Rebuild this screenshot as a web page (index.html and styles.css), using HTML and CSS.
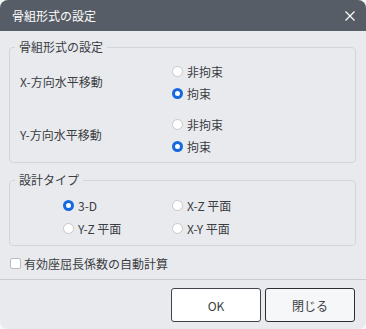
FILE: index.html
```html
<!DOCTYPE html>
<html>
<head>
    <title>骨組形式の設定</title>
    <link rel="stylesheet" href="styles.css">
</head>
<body>
    <div class="dialog">
        <div class="titlebar">
            <span class="title">骨組形式の設定</span>
            <button class="close-btn" aria-label="閉じる">
                <svg width="10" height="10" viewBox="0 0 10 10">
                    <path d="M0.5 0.5 L9.5 9.5 M9.5 0.5 L0.5 9.5" stroke="#ffffff" stroke-width="1.2" fill="none"/>
                </svg>
            </button>
        </div>

        <div class="dialog-body">
            <fieldset class="group">
                <legend>骨組形式の設定</legend>

                <div class="move-row">
                    <span class="row-label">X-方向水平移動</span>
                    <div class="radio-list">
                        <label class="radio"><input type="radio" name="xmove"><span>非拘束</span></label>
                        <label class="radio"><input type="radio" name="xmove" checked><span>拘束</span></label>
                    </div>
                </div>

                <div class="move-row">
                    <span class="row-label">Y-方向水平移動</span>
                    <div class="radio-list">
                        <label class="radio"><input type="radio" name="ymove"><span>非拘束</span></label>
                        <label class="radio"><input type="radio" name="ymove" checked><span>拘束</span></label>
                    </div>
                </div>
            </fieldset>

            <fieldset class="group type-group">
                <legend>設計タイプ</legend>
                <div class="type-grid">
                    <label class="radio"><input type="radio" name="dtype" checked><span>3-D</span></label>
                    <label class="radio"><input type="radio" name="dtype"><span>X-Z 平面</span></label>
                    <label class="radio"><input type="radio" name="dtype"><span>Y-Z 平面</span></label>
                    <label class="radio"><input type="radio" name="dtype"><span>X-Y 平面</span></label>
                </div>
            </fieldset>

            <label class="check"><input type="checkbox"><span>有効座屈長係数の自動計算</span></label>
        </div>

        <div class="footer">
            <button class="btn btn-ok">OK</button>
            <button class="btn btn-close">閉じる</button>
        </div>
    </div>
</body>
</html>
```

FILE: styles.css
```css
/* Page */
html, body {
    margin: 0;
    padding: 0;
}

body {
    background-color: #f3f6f2;
    font-family: "Noto Sans CJK JP", "Noto Sans", sans-serif;
    font-size: 12px;
    color: #3a3d42;
}

/* Dialog frame */
.dialog {
    width: 366px;
    height: 329px;
    background-color: #e9eaee;
    border-radius: 8px;
    overflow: hidden;
    display: flex;
    flex-direction: column;
}

.titlebar {
    height: 31px;
    background-color: #575d66;
    color: #ffffff;
    display: flex;
    align-items: center;
    justify-content: space-between;
    padding: 0 10px 0 12px;
    flex-shrink: 0;
}

.title {
    font-size: 12px;
    line-height: 14px;
}

.close-btn {
    background: none;
    border: none;
    padding: 0;
    width: 12px;
    height: 12px;
    display: flex;
    align-items: center;
    justify-content: center;
    cursor: pointer;
}

.dialog-body {
    flex: 1;
    padding: 0 10px 0 9px;
}

/* Groups */
.group {
    margin: 9px 0 0 0;
    padding: 6px 10px 5px 10px;
    border: 1px solid #d3d5da;
    border-radius: 4px;
}

.group legend {
    padding: 0 4px;
    margin-left: -5px;
    line-height: 14px;
    color: #3a3d42;
}

.type-group {
    margin-top: 10px;
    padding-top: 7px;
}

.move-row {
    display: grid;
    grid-template-columns: 152px 1fr;
    align-items: center;
}

.move-row + .move-row {
    margin-top: 9px;
}

.row-label {
    line-height: 14px;
}

.radio-list {
    display: flex;
    flex-direction: column;
}

.radio {
    display: flex;
    align-items: center;
    height: 22px;
    gap: 4px;
    cursor: pointer;
}

.radio input {
    appearance: none;
    -webkit-appearance: none;
    width: 11px;
    height: 11px;
    margin: 0;
    border: 1px solid #c6c8cc;
    border-radius: 50%;
    background-color: #ffffff;
    box-sizing: border-box;
}

.radio input:checked {
    border: 3px solid #1769e0;
}

.type-grid {
    display: grid;
    grid-template-columns: 109px 1fr;
    grid-auto-rows: 23px;
    padding-left: 43px;
}

.type-grid .radio {
    height: 23px;
}

/* Checkbox */
.check {
    display: flex;
    align-items: center;
    gap: 3px;
    height: 20px;
    margin-top: 7px;
    margin-left: 1px;
}

.check input {
    appearance: none;
    -webkit-appearance: none;
    width: 11px;
    height: 11px;
    margin: 0;
    border: 1px solid #b9bbc0;
    border-radius: 2px;
    background-color: #ffffff;
    box-sizing: border-box;
}

/* Footer */
.footer {
    border-top: 1px solid #c9cbcf;
    height: 50px;
    box-sizing: border-box;
    padding: 8px 11px 0 0;
    display: flex;
    justify-content: flex-end;
    gap: 4px;
    margin-top: 5px;
}

.btn {
    width: 90px;
    height: 34px;
    border: 1px solid #3f434a;
    border-radius: 3px;
    background-color: #ffffff;
    color: #3a3d42;
    font-family: "Noto Sans CJK JP", "Noto Sans", sans-serif;
    font-size: 12px;
    cursor: pointer;
}

.btn-close {
    background-color: #f6f7f9;
    border-color: #2b2e33;
}
```
